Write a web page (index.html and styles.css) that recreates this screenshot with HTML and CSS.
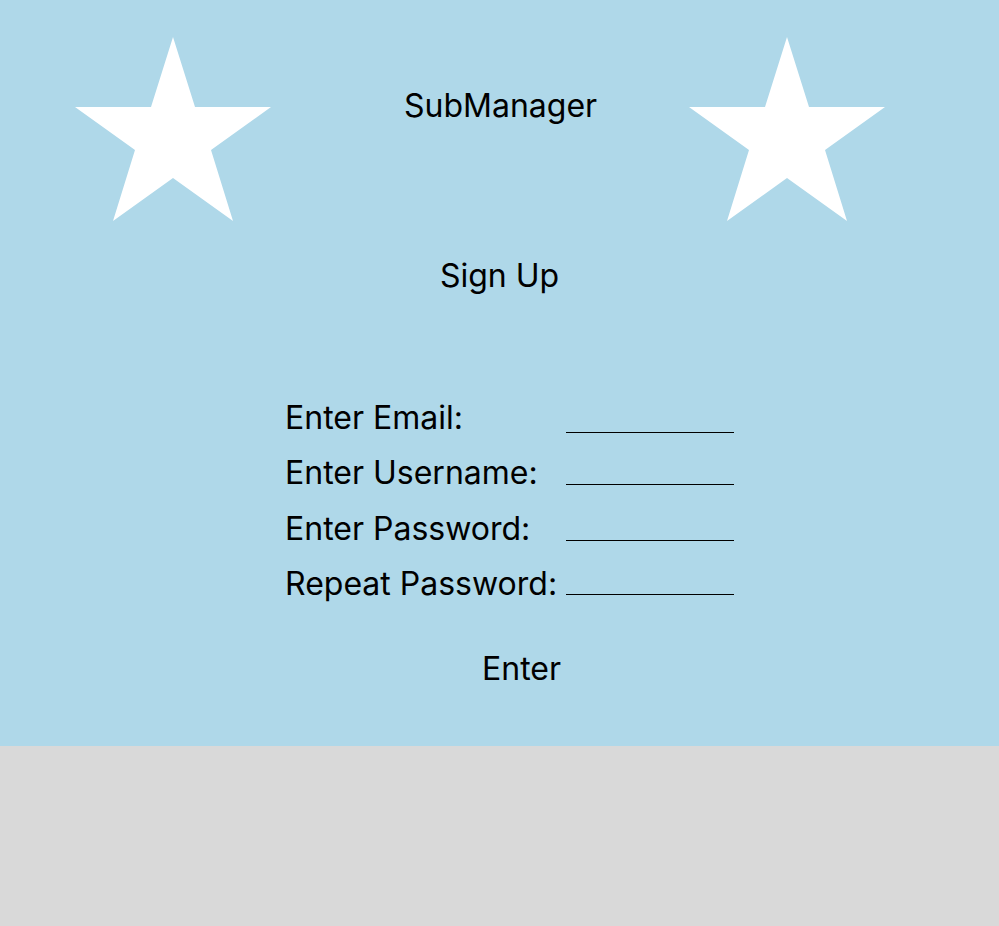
FILE: index.html
```html
<!DOCTYPE html>
<html lang="en">
<head>
<meta charset="utf-8">
<title>SubManager - Sign Up</title>
<link rel="stylesheet" href="styles.css">
</head>
<body>
<main class="panel">
  <header class="header">
    <svg class="star" width="196" height="184" viewBox="0 0 196 184" aria-hidden="true">
      <polygon fill="#fff" points="98,0 120,70 196,70 136,113 158,184 98,141 38,184 60,113 0,70 76,70"/>
    </svg>
    <h1 class="title">SubManager</h1>
    <svg class="star" width="196" height="184" viewBox="0 0 196 184" aria-hidden="true">
      <polygon fill="#fff" points="98,0 120,70 196,70 136,113 158,184 98,141 38,184 60,113 0,70 76,70"/>
    </svg>
  </header>
  <h2 class="subtitle">Sign Up</h2>
  <form class="form">
    <label class="label">Enter Email:</label><span class="field field-first"></span>
    <label class="label">Enter Username:</label><span class="field"></span>
    <label class="label">Enter Password:</label><span class="field field-mid"></span>
    <label class="label">Repeat Password:</label><span class="field field-last"></span>
  </form>
  <div class="enter">Enter</div>
</main>
</body>
</html>
```

FILE: styles.css
```css
html, body {
  margin: 0;
  padding: 0;
}
body {
  background: #d9d9d9;
  font-family: Inter, "Noto Sans", sans-serif;
  color: #000;
  width: 999px;
  height: 926px;
}
.panel {
  background: #afd8e9;
  height: 746px;
  box-sizing: border-box;
  padding-top: 37px;
  font-size: 32px;
  line-height: 39px;
}
.header {
  display: flex;
  align-items: flex-start;
  padding-left: 75px;
}
.star {
  display: block;
  flex: none;
}
.title {
  margin: 49px 95px 0 133px;
  font-size: 32px;
  font-weight: 400;
  line-height: 39px;
  width: 190px;
  text-align: center;
  white-space: nowrap;
}
.subtitle {
  margin: 35px 0 0 0;
  font-size: 32px;
  font-weight: 400;
  line-height: 39px;
  text-align: center;
}
.form {
  display: grid;
  grid-template-columns: 281px 168px;
  row-gap: 16.33px;
  margin: 103px 0 0 285px;
}
.label {
  white-space: nowrap;
}
.field {
  align-self: end;
  border-bottom: 1px solid #000;
  margin-bottom: 7px;
}
.field-first {
  margin-bottom: 4px;
}
.field-mid {
  margin-bottom: 7px;
}
.field-last {
  margin-bottom: 8px;
}
.enter {
  margin: 46px 0 0 482px;
}
```
